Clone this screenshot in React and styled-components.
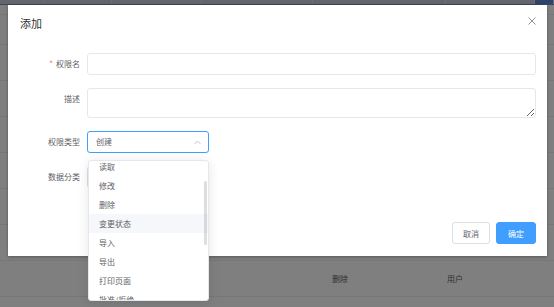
import React from "react";
import styled, { createGlobalStyle } from "styled-components";

const Global = createGlobalStyle`
  html, body { margin: 0; padding: 0; width: 554px; height: 307px; overflow: hidden; }
  body { font-family: "Noto Sans CJK SC", "Noto Sans", sans-serif; }
  * { box-sizing: border-box; }
`;

const Page = styled.div`
  position: relative;
  width: 554px;
  height: 307px;
  background: #ffffff;
  overflow: hidden;
`;

const TopBar = styled.div`
  height: 5px;
  display: flex;
  background: #c4cbd6;
  border-bottom: 1px solid #6f8fc4;
`;

const TopCell = styled.div`
  flex: ${(p) => p.$grow || 1};
  border-right: 1px solid #d6dbe3;
  background: ${(p) => (p.$accent ? "#5a86d6" : "transparent")};
`;

const Table = styled.div`
  display: flex;
  flex-direction: column;
`;

const TableRow = styled.div`
  height: ${(p) => p.$h}px;
  border-bottom: 1px solid #ebeef5;
  display: grid;
  grid-template-columns: 300px 80px 1fr;
  align-items: center;
  font-size: 8px;
  line-height: 12px;
  color: #606266;
`;

const Cell = styled.div`
  text-align: ${(p) => (p.$left ? "left" : "center")};
  padding-left: ${(p) => p.$pl || 0}px;
`;

const Mask = styled.div`
  position: absolute;
  inset: 0;
  background: rgba(0, 0, 0, 0.5);
`;

const Dialog = styled.div`
  position: absolute;
  left: 8px;
  top: 5px;
  width: 539px;
  height: 251px;
  background: #fff;
  box-shadow: 0 1px 3px rgba(0, 0, 0, 0.3);
  display: flex;
  flex-direction: column;
`;

const Header = styled.div`
  position: relative;
  height: 48px;
  padding: 11px 0 0 12px;
  font-size: 11px;
  line-height: 14px;
`;

const Title = styled.div`
  font-size: 11px;
  line-height: 14px;
  color: #303133;
`;

const Close = styled.svg`
  position: absolute;
  right: 11px;
  top: 12px;
  width: 8px;
  height: 8px;
`;

const Form = styled.div`
  display: grid;
  grid-template-columns: 79px 1fr;
  row-gap: 13px;
  padding-right: 11px;
`;

const Label = styled.label`
  font-size: 8px;
  line-height: 22px;
  height: 22px;
  color: #606266;
  text-align: right;
  padding-right: 7px;
  white-space: nowrap;
`;

const Star = styled.span`
  color: #f56c6c;
  margin-right: 3px;
`;

const Input = styled.input`
  height: 22px;
  width: 100%;
  border: 1px solid #e4e7ed;
  border-radius: 3px;
  outline: none;
  font-size: 8px;
  padding: 0 8px;
`;

const TextArea = styled.textarea`
  height: 30px;
  width: 100%;
  border: 1px solid #e4e7ed;
  border-radius: 3px;
  outline: none;
  resize: vertical;
  font-size: 8px;
  padding: 3px 8px;
  display: block;
`;

const Select = styled.div`
  width: 122px;
  height: 22px;
  border: 1px solid ${(p) => (p.$focus ? "#409eff" : "#dcdfe6")};
  border-radius: 3px;
  display: flex;
  align-items: center;
  justify-content: space-between;
  padding: 0 7px 0 8px;
  font-size: 8px;
  line-height: 12px;
  color: #606266;
`;

const Arrow = styled.svg`
  width: 7px;
  height: 5px;
  flex: none;
`;

const Footer = styled.div`
  display: flex;
  justify-content: flex-end;
  gap: 6px;
  padding: 34px 11px 12px 0;
`;

const Button = styled.button`
  height: 22px;
  padding: 0 ${(p) => (p.$primary ? 11 : 10)}px;
  font-family: inherit;
  font-size: 8px;
  border-radius: 3px;
  border: 1px solid ${(p) => (p.$primary ? "#409eff" : "#dcdfe6")};
  background: ${(p) => (p.$primary ? "#409eff" : "#fff")};
  color: ${(p) => (p.$primary ? "#fff" : "#606266")};
`;

const Dropdown = styled.div`
  position: absolute;
  left: 88px;
  top: 160px;
  width: 121px;
  height: 141px;
  background: #fff;
  border: 1px solid #e4e7ed;
  border-radius: 3px;
  box-shadow: 0 2px 12px rgba(0, 0, 0, 0.1);
  overflow: hidden;
`;

const List = styled.ul`
  list-style: none;
  margin: -8px 0 0 0;
  padding: 4px 0 0 0;
`;

const Item = styled.li`
  height: 19px;
  line-height: 19px;
  padding: 0 10px;
  font-size: 8px;
  color: #606266;
  background: ${(p) => (p.$hover ? "#f5f7fa" : "transparent")};
  white-space: nowrap;
`;

const Thumb = styled.div`
  position: absolute;
  right: 1px;
  top: 20px;
  width: 3px;
  height: 64px;
  border-radius: 2px;
  background: rgba(144, 147, 153, 0.3);
`;

const items = ["读取", "修改", "删除", "变更状态", "导入", "导出", "打印页面", "批准/拒绝"];
const plainRows = [10, 30, 36, 36, 36, 36, 36, 36];

export default function App() {
  return (
    <>
      <Global />
      <Page>
        <TopBar>
          <TopCell $grow={1} />
          <TopCell $grow={1.5} />
          <TopCell $grow={2} />
          <TopCell $grow={2.5} />
          <TopCell $grow={3} />
          <TopCell $grow={2} />
          <TopCell $grow={0.4} $accent />
        </TopBar>
        <Table>
          {plainRows.map((h, i) => (
            <TableRow key={i} $h={h} />
          ))}
          <TableRow $h={36}>
            <Cell />
            <Cell>删除</Cell>
            <Cell $left $pl={67}>用户</Cell>
          </TableRow>
          <TableRow $h={36} />
        </Table>
        <Mask />
        <Dialog>
          <Header>
            <Title>添加</Title>
            <Close viewBox="0 0 8 8">
              <path d="M0.5 0.5L7.5 7.5M7.5 0.5L0.5 7.5" stroke="#909399" strokeWidth="1" />
            </Close>
          </Header>
          <Form>
            <Label><Star>*</Star>权限名</Label>
            <Input />
            <Label>描述</Label>
            <TextArea />
            <Label>权限类型</Label>
            <Select $focus>
              <span>创建</span>
              <Arrow viewBox="0 0 7 5">
                <path d="M0.5 4L3.5 1L6.5 4" fill="none" stroke="#c0c4cc" strokeWidth="1" />
              </Arrow>
            </Select>
            <Label>数据分类</Label>
            <Select />
          </Form>
          <Footer>
            <Button>取消</Button>
            <Button $primary>确定</Button>
          </Footer>
        </Dialog>
        <Dropdown>
          <List>
            {items.map((t) => (
              <Item key={t} $hover={t === "变更状态"}>{t}</Item>
            ))}
          </List>
          <Thumb />
        </Dropdown>
      </Page>
    </>
  );
}
